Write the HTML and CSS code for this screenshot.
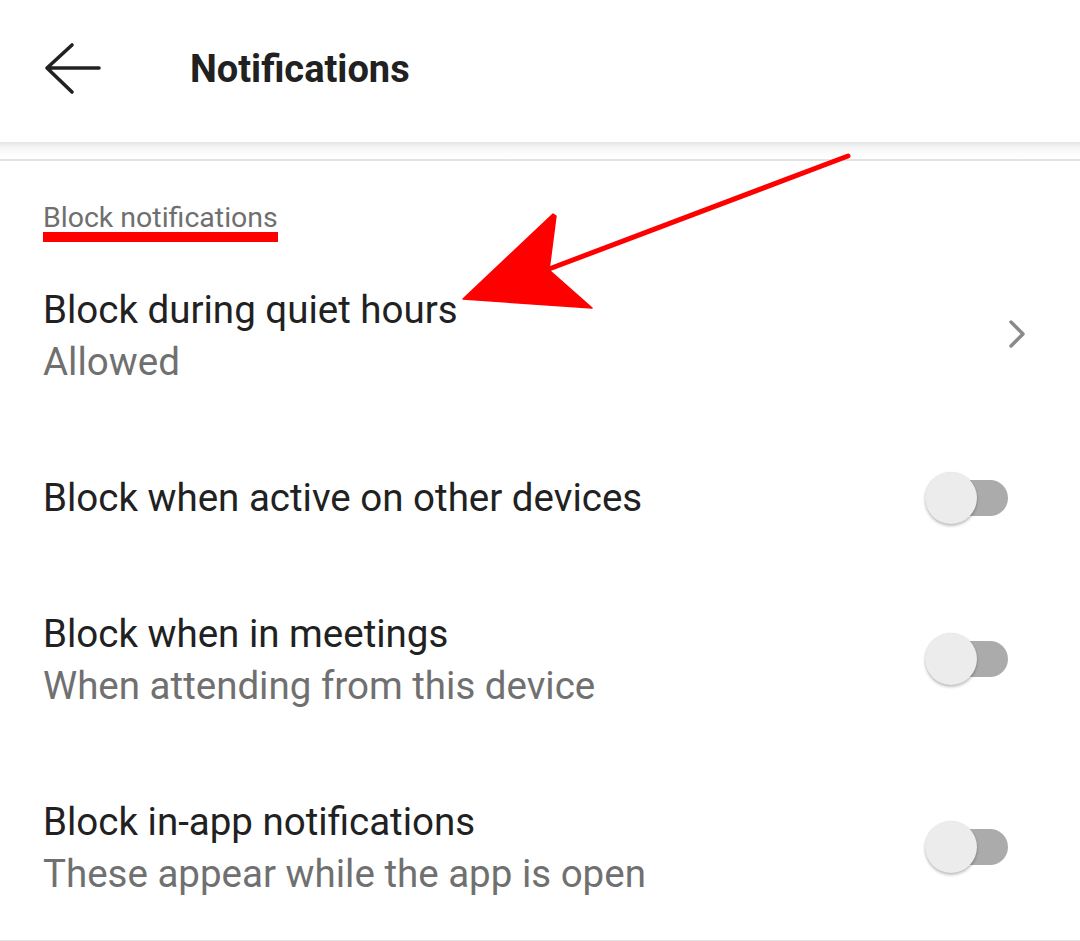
FILE: index.html
```html
<!DOCTYPE html>
<html lang="en">
<head>
<meta charset="utf-8">
<title>Notifications</title>
<link rel="stylesheet" href="styles.css">
</head>
<body>
<div class="page">
  <header class="appbar">
    <svg class="back" width="64" height="64" viewBox="0 0 64 64" aria-hidden="true">
      <path d="M32 9 L7 32 L32 56 M7 32 L59 32" fill="none" stroke="#222" stroke-width="3.6" stroke-linecap="round" stroke-linejoin="round"/>
    </svg>
    <h1 class="title">Notifications</h1>
  </header>
  <div class="band"></div>

  <section class="group">
    <div class="group-head"><span class="group-label">Block notifications</span></div>

    <div class="row row-two">
      <div class="texts">
        <div class="primary">Block during quiet hours</div>
        <div class="secondary">Allowed</div>
      </div>
      <svg class="chev" width="24" height="32" viewBox="0 0 24 32" aria-hidden="true">
        <path d="M7 4 L19 16 L7 28" fill="none" stroke="#8a8a8a" stroke-width="3.4" stroke-linecap="round" stroke-linejoin="round"/>
      </svg>
    </div>

    <div class="row row-one">
      <div class="texts">
        <div class="primary">Block when active on other devices</div>
      </div>
      <div class="switch"><div class="track"></div><div class="thumb"></div></div>
    </div>

    <div class="row row-two">
      <div class="texts">
        <div class="primary">Block when in meetings</div>
        <div class="secondary">When attending from this device</div>
      </div>
      <div class="switch"><div class="track"></div><div class="thumb"></div></div>
    </div>

    <div class="row row-two row-last">
      <div class="texts">
        <div class="primary">Block in-app notifications</div>
        <div class="secondary">These appear while the app is open</div>
      </div>
      <div class="switch"><div class="track"></div><div class="thumb"></div></div>
    </div>
  </section>

  <svg class="annot" width="1080" height="941" viewBox="0 0 1080 941" aria-hidden="true">
    <line x1="549" y1="269" x2="848" y2="156" stroke="#ff0000" stroke-width="5" stroke-linecap="round"/>
    <polygon points="463,299 553,214 556,216 549,270 592,308" fill="#ff0000" stroke="#ff0000" stroke-width="1.5" stroke-linejoin="round"/>
  </svg>
</div>
</body>
</html>
```
FILE: styles.css
```css
html, body {
  margin: 0;
  padding: 0;
  background: #ffffff;
}

body {
  font-family: Roboto, "Noto Sans", "Liberation Sans", sans-serif;
  color: #212121;
  overflow: hidden;
}

.page {
  position: relative;
  width: 1080px;
  height: 941px;
  overflow: hidden;
}

.appbar {
  height: 142px;
  box-sizing: border-box;
  padding: 0 0 5px 40px;
  display: flex;
  align-items: center;
  background: #fff;
}

.back {
  flex: none;
  display: block;
  margin-bottom: 2px;
}

.title {
  margin: 0 0 0 86px;
  font-size: 38px;
  font-weight: 700;
  color: #212121;
  line-height: 1;
}

.band {
  height: 17px;
  background: linear-gradient(#e4e4e4 0px, #f2f2f2 4px, #fafafa 9px, #ffffff 17px);
  border-bottom: 2px solid #e2e2e2;
}

.group-head {
  padding: 42px 0 0 43px;
  line-height: 0;
}

.group-label {
  display: inline-block;
  font-size: 28.5px;
  line-height: 29px;
  color: #6f6f6f;
  border-bottom: 10px solid #ff0000;
}

.row {
  display: flex;
  align-items: center;
  padding: 42px 52px 42px 43px;
}

.texts {
  flex: 1;
  min-width: 0;
}

.primary {
  font-size: 38.5px;
  line-height: 52px;
  color: #212121;
}

.secondary {
  font-size: 38.5px;
  line-height: 52px;
  color: #707070;
}

.chev {
  flex: none;
  display: block;
  margin-bottom: 4px;
}

.switch {
  position: relative;
  flex: none;
  width: 83px;
  height: 52px;
  margin-right: 20px;
  display: flex;
  align-items: center;
}

.row-two .switch {
  margin-bottom: 3px;
}

.track {
  margin-left: 7px;
  width: 76px;
  height: 36px;
  border-radius: 18px;
  background: #ababab;
}

.thumb {
  position: absolute;
  left: 0;
  top: 0;
  width: 52px;
  height: 52px;
  border-radius: 50%;
  background: #ececec;
  box-shadow: 0 2px 3px rgba(0, 0, 0, 0.25), 0 0 1px rgba(0, 0, 0, 0.12);
}

.row-last {
  padding-bottom: 40px;
  border-bottom: 2px solid #e2e2e2;
}

.annot {
  position: absolute;
  left: 0;
  top: 0;
  pointer-events: none;
}
```
